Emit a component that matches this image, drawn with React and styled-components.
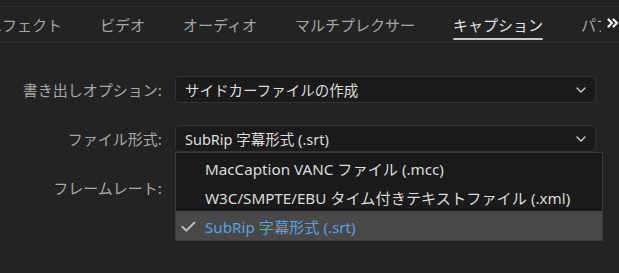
import React from "react";
import styled, { createGlobalStyle } from "styled-components";

const GlobalStyle = createGlobalStyle`
  html, body {
    margin: 0;
    padding: 0;
    background: #232323;
  }
  body {
    font-family: "Noto Sans CJK JP", "Noto Sans", sans-serif;
  }
`;

const mixedFont = `"Noto Sans", "Noto Sans CJK JP", sans-serif`;

const Page = styled.div`
  width: 619px;
  height: 273px;
  overflow: hidden;
  background: #232323;
  padding-top: 6px;
  box-sizing: border-box;
  position: relative;
`;

const TabBar = styled.div`
  position: relative;
  height: 35px;
  border-top: 1px solid #2e2e2e;
  border-bottom: 1px solid #303030;
  overflow: hidden;
`;

const TabRow = styled.div`
  display: flex;
  gap: 38px;
  margin-left: -13px;
  height: 100%;
  white-space: nowrap;
`;

const Tab = styled.div`
  position: relative;
  font-size: 15px;
  line-height: 35px;
  height: 35px;
  color: ${p => (p.active ? "#e4e4e4" : "#a6a6a6")};
  &::after {
    content: "";
    display: ${p => (p.active ? "block" : "none")};
    position: absolute;
    left: 0;
    right: 0;
    bottom: 2px;
    height: 2px;
    border-radius: 1px;
    background: #c9c9c9;
  }
`;

const MoreButton = styled.div`
  position: absolute;
  right: 0;
  top: 0;
  width: 18px;
  height: 100%;
  background: #232323;
  display: flex;
  align-items: center;
  justify-content: flex-end;
  padding-bottom: 4px;
  box-sizing: border-box;
`;

const Form = styled.div`
  display: grid;
  grid-template-columns: 162px 421px;
  column-gap: 13px;
  row-gap: 22px;
  padding-top: 33px;
`;

const Label = styled.div`
  font-size: 15px;
  line-height: 27px;
  color: #a8a8a8;
  text-align: right;
  white-space: nowrap;
`;

const Field = styled.div`
  position: relative;
`;

const Select = styled.div`
  height: 27px;
  box-sizing: border-box;
  background: #1b1b1b;
  border: 1px solid #333333;
  border-radius: 4px;
  display: flex;
  align-items: center;
  justify-content: space-between;
  padding: 0 9px 0 9px;
  font-family: ${mixedFont};
  font-size: 14.5px;
  color: #dedede;
  white-space: nowrap;
`;

const Menu = styled.div`
  position: absolute;
  top: 27px;
  left: 0;
  width: 428px;
  box-sizing: border-box;
  background: #1a1a1a;
  border: 1px solid #3a3a3a;
  z-index: 2;
`;

const Item = styled.div`
  height: 29px;
  display: flex;
  align-items: center;
  padding-left: 29px;
  position: relative;
  font-family: ${mixedFont};
  font-size: 15.2px;
  white-space: nowrap;
  color: ${p => (p.selected ? "#56a0e6" : "#dcdcdc")};
  background: ${p => (p.selected ? "#484848" : "transparent")};
`;

const Check = styled.svg`
  position: absolute;
  left: 5px;
  top: 10px;
`;

const Chevron = () => (
  <svg width="10" height="6" viewBox="0 0 10 6">
    <path d="M1 1l4 4 4-4" fill="none" stroke="#cfcfcf" strokeWidth="1.4" strokeLinecap="round" strokeLinejoin="round" />
  </svg>
);

const tabs = ["エフェクト", "ビデオ", "オーディオ", "マルチプレクサー", "キャプション", "パブリッシュ"];

const options = [
  "MacCaption VANC ファイル (.mcc)",
  "W3C/SMPTE/EBU タイム付きテキストファイル (.xml)",
  "SubRip 字幕形式 (.srt)",
];

export default function App() {
  return (
    <Page>
      <GlobalStyle />
      <TabBar>
        <TabRow>
          {tabs.map(t => (
            <Tab key={t} active={t === "キャプション"}>{t}</Tab>
          ))}
        </TabRow>
        <MoreButton>
          <svg width="12" height="10" viewBox="0 0 12 10">
            <path d="M1.5 1.5l3.5 3.5-3.5 3.5M6.5 1.5l3.5 3.5-3.5 3.5" fill="none" stroke="#f2f2f2" strokeWidth="2.2" strokeLinecap="round" strokeLinejoin="round" />
          </svg>
        </MoreButton>
      </TabBar>
      <Form>
        <Label>書き出しオプション:</Label>
        <Field>
          <Select>
            <span>サイドカーファイルの作成</span>
            <Chevron />
          </Select>
        </Field>
        <Label>ファイル形式:</Label>
        <Field>
          <Select>
            <span>SubRip 字幕形式 (.srt)</span>
            <Chevron />
          </Select>
          <Menu>
            {options.map((o, i) => (
              <Item key={o} selected={i === 2}>
                {i === 2 && (
                  <Check width="15" height="11" viewBox="0 0 15 11">
                    <path d="M1.5 6l3.8 3.6L13.5 1.5" fill="none" stroke="#bdbdbd" strokeWidth="2" strokeLinecap="round" strokeLinejoin="round" />
                  </Check>
                )}
                {o}
              </Item>
            ))}
          </Menu>
        </Field>
        <Label>フレームレート:</Label>
        <Field>
          <Select>
            <span />
            <Chevron />
          </Select>
        </Field>
      </Form>
    </Page>
  );
}
